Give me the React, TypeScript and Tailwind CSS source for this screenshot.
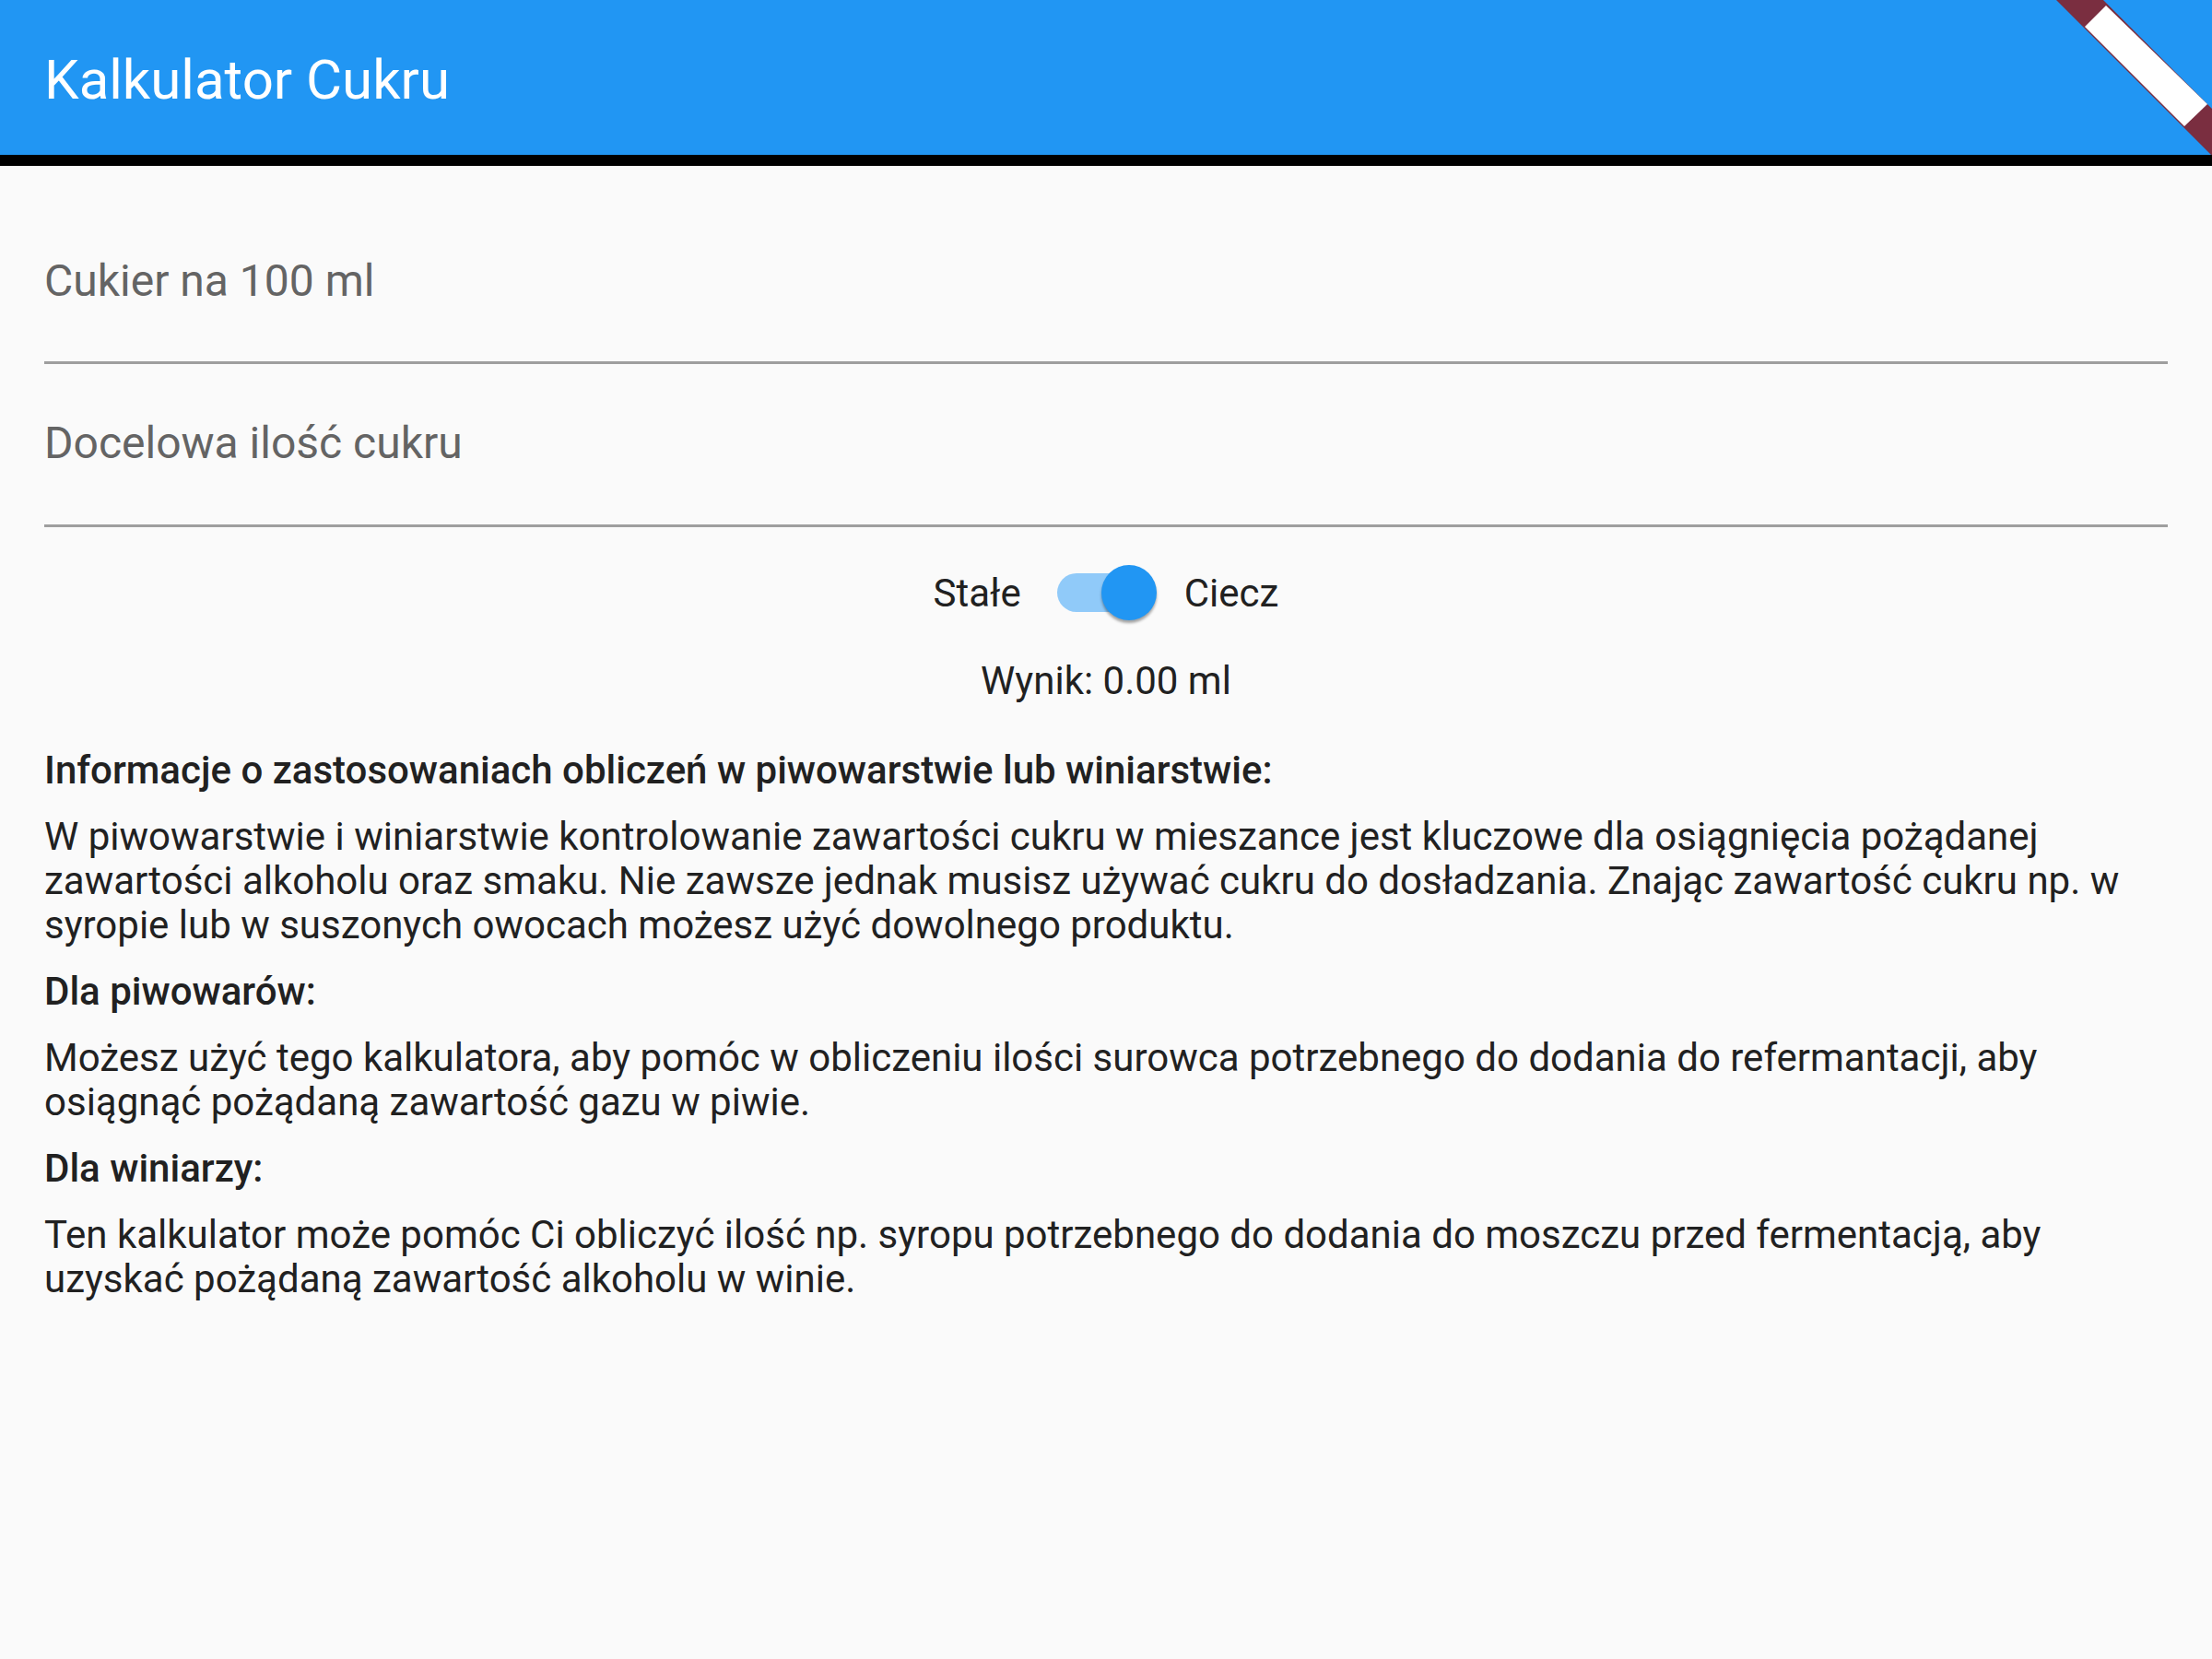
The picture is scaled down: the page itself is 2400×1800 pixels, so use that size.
import React from "react";

function DebugBanner() {
  return (
    <svg
      className="absolute top-0 right-0"
      width="170"
      height="170"
      viewBox="0 0 170 170"
    >
      <polygon points="1,0 52,0 170,118 170,169" fill="#7a2e40" />
      <polygon points="55,6 32,29 140,137 165,113" fill="#ffffff" />
    </svg>
  );
}

export default function App() {
  return (
    <div className="min-h-[1800px] w-full bg-[#fafafa] font-[Roboto] text-[#212121]">
      <header className="relative h-[180px] overflow-hidden border-b-[12px] border-black bg-[#2196f3]">
        <div className="flex h-[168px] items-center px-[48px] pt-[5px]">
          <h1 className="text-[60px] leading-[70px] font-normal text-white">Kalkulator Cukru</h1>
        </div>
        <DebugBanner />
      </header>

      <main className="px-[48px]">
        <div className="border-b-[3px] border-[#9e9e9e] pt-[97px] pb-[59px]">
          <div className="text-[48px] leading-[56px] text-[#646464]">Cukier na 100 ml</div>
        </div>
        <div className="border-b-[3px] border-[#9e9e9e] pt-[58px] pb-[60px]">
          <div className="text-[48px] leading-[56px] text-[#646464]">Docelowa ilość cukru</div>
        </div>

        <div className="flex h-[142px] items-center justify-center text-[42px] leading-[47px]">
          <span>Stałe</span>
          <div className="flex w-[177px] items-center justify-start pl-[39px]">
            <div className="relative h-[42px] w-[99px] rounded-full bg-[#90caf9]">
              <div className="absolute top-[-9px] right-[-9px] h-[60px] w-[60px] rounded-full bg-[#2196f3] shadow-[0_3px_3px_rgba(0,0,0,0.35)]" />
            </div>
          </div>
          <span>Ciecz</span>
        </div>

        <div className="pt-[1px] text-center text-[42px] leading-[47px]">Wynik: 0.00 ml</div>

        <section className="mt-[50px] text-[42px] leading-[48px]">
          <h2 className="mb-[24px] font-medium">
            Informacje o zastosowaniach obliczeń w piwowarstwie lub winiarstwie:
          </h2>
          <p className="mb-[24px]">
            W piwowarstwie i winiarstwie kontrolowanie zawartości cukru w mieszance jest kluczowe dla osiągnięcia pożądanej zawartości alkoholu oraz smaku. Nie zawsze jednak musisz używać cukru do dosładzania. Znając zawartość cukru np. w syropie lub w suszonych owocach możesz użyć dowolnego produktu.
          </p>
          <h2 className="mb-[24px] font-medium">Dla piwowarów:</h2>
          <p className="mb-[24px]">
            Możesz użyć tego kalkulatora, aby pomóc w obliczeniu ilości surowca potrzebnego do dodania do refermantacji, aby osiągnąć pożądaną zawartość gazu w piwie.
          </p>
          <h2 className="mb-[24px] font-medium">Dla winiarzy:</h2>
          <p>
            Ten kalkulator może pomóc Ci obliczyć ilość np. syropu potrzebnego do dodania do moszczu przed fermentacją, aby uzyskać pożądaną zawartość alkoholu w winie.
          </p>
        </section>
      </main>
    </div>
  );
}
